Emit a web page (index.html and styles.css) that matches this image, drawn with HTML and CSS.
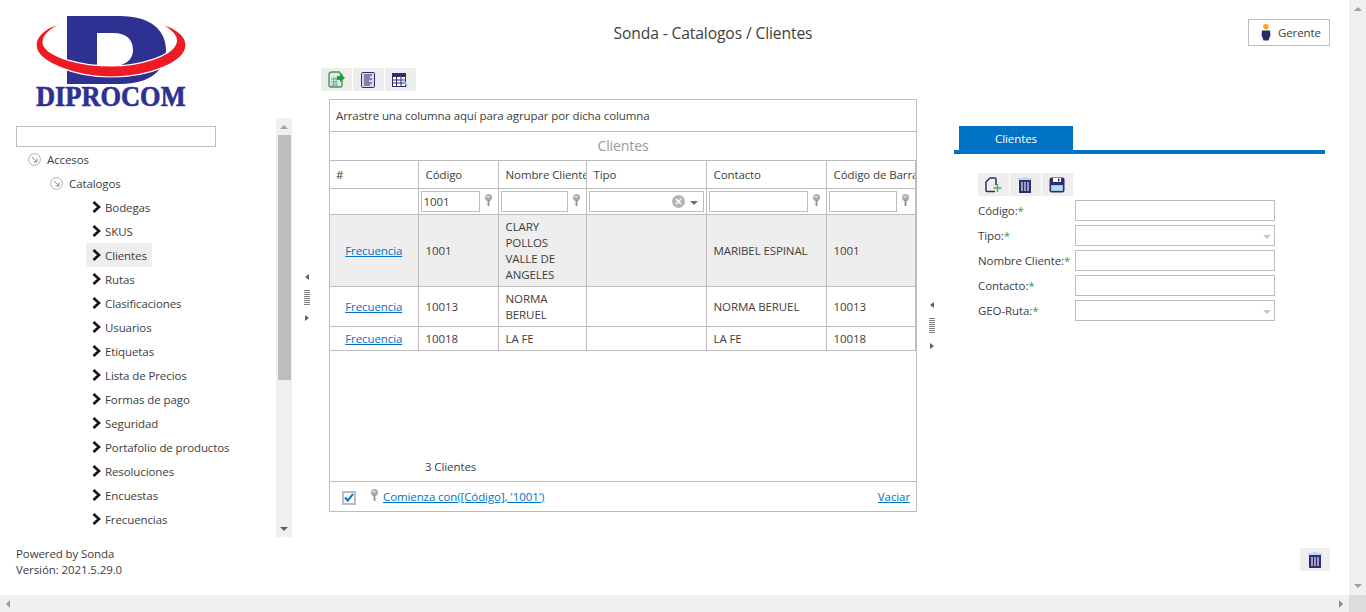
FILE: index.html
```html
<!DOCTYPE html>
<html lang="es">

<head>
    <meta charset="UTF-8">
    <meta name="viewport" content="width=device-width, initial-scale=1.0">
    <title>Sonda - Catalogos / Clientes</title>
    <link rel="stylesheet" href="styles.css">
</head>

<body>
    <svg class="defs" width="0" height="0">
        <symbol id="pin" viewBox="0 0 9 12">
            <circle cx="4.5" cy="3.5" r="3.5" fill="#a8a8a8" />
            <ellipse cx="4" cy="2.6" rx="2" ry="1.2" fill="#d8d8d8" />
            <rect x="3.6" y="6" width="1.8" height="6" fill="#8c8c8c" />
        </symbol>
        <symbol id="chevron" viewBox="0 0 9 12">
            <path d="M1.5 1 L7 6 L1.5 11" fill="none" stroke="#111" stroke-width="2.6" />
        </symbol>
        <symbol id="node" viewBox="0 0 13 13">
            <circle cx="6.5" cy="6.5" r="5.9" fill="none" stroke="#b0b0b0" stroke-width="1" />
            <path d="M4 4 L9 9 M9 5.5 V9 H5.5" fill="none" stroke="#8a8a8a" stroke-width="1" />
        </symbol>
        <symbol id="trash" viewBox="0 0 16 16">
            <rect x="1" y="1" width="14" height="2" fill="#b5dcf2" />
            <rect x="6" y="0" width="4" height="2" fill="#b5dcf2" />
            <rect x="2" y="3" width="12" height="13" fill="#2f2d6e" />
            <rect x="4" y="5" width="2" height="9" fill="#9c9bc0" />
            <rect x="7" y="5" width="2" height="9" fill="#9c9bc0" />
            <rect x="10" y="5" width="2" height="9" fill="#9c9bc0" />
        </symbol>
    </svg>

    <div class="window">
        <div class="page">
            <aside class="sidebar">
                <svg class="logo" viewBox="0 0 150 98" width="150" height="98" role="img" aria-label="Diprocom">
                    <path fill="#2e3192" fill-rule="evenodd"
                        d="M31 0 H84 C114 0 130 14 130 34 C130 54 114 68 84 68 H31 Z M61 17 H77 C91 17 97 24 97 34 C97 44 89 50 77 50 H61 Z" />
                    <path fill="#ed1c24" stroke="#fff" stroke-width="1.2"
                        d="M27 7 C6 12 0 22 0 29 C0 46 39 61 75 61 C114 61 150 46 150 29 C150 21 142 12 122 7 C136 13 142 21 140 27 C136 40 104 50 75 50 C44 50 14 41 8 30 C4 21 14 13 27 7 Z" />
                    <text class="logo-text" x="0" y="83.3" transform="scale(1 1.08)">DIPROCOM</text>
                </svg>
                <div class="tree-box">
                    <div class="tree">
                        <input class="tree-search" type="text">
                        <ul class="tree-list">
                            <li class="level-1"><svg class="node"><use href="#node" /></svg>Accesos</li>
                            <li class="level-2"><svg class="node"><use href="#node" /></svg>Catalogos</li>
                            <li class="leaf"><svg class="chevron"><use href="#chevron" /></svg>Bodegas</li>
                            <li class="leaf"><svg class="chevron"><use href="#chevron" /></svg>SKUS</li>
                            <li class="leaf selected"><svg class="chevron"><use href="#chevron" /></svg>Clientes</li>
                            <li class="leaf"><svg class="chevron"><use href="#chevron" /></svg>Rutas</li>
                            <li class="leaf"><svg class="chevron"><use href="#chevron" /></svg>Clasificaciones</li>
                            <li class="leaf"><svg class="chevron"><use href="#chevron" /></svg>Usuarios</li>
                            <li class="leaf"><svg class="chevron"><use href="#chevron" /></svg>Etiquetas</li>
                            <li class="leaf"><svg class="chevron"><use href="#chevron" /></svg>Lista de Precios</li>
                            <li class="leaf"><svg class="chevron"><use href="#chevron" /></svg>Formas de pago</li>
                            <li class="leaf"><svg class="chevron"><use href="#chevron" /></svg>Seguridad</li>
                            <li class="leaf"><svg class="chevron"><use href="#chevron" /></svg>Portafolio de productos</li>
                            <li class="leaf"><svg class="chevron"><use href="#chevron" /></svg>Resoluciones</li>
                            <li class="leaf"><svg class="chevron"><use href="#chevron" /></svg>Encuestas</li>
                            <li class="leaf"><svg class="chevron"><use href="#chevron" /></svg>Frecuencias</li>
                        </ul>
                    </div>
                    <div class="tree-scroll">
                        <span class="arrow-up"></span>
                        <span class="tree-thumb"></span>
                        <span class="arrow-down"></span>
                    </div>
                </div>
                <p class="powered">Powered by Sonda<br>Versión: 2021.5.29.0</p>
            </aside>

            <main class="content">
                <header class="topbar">
                    <h1>Sonda - Catalogos / Clientes</h1>
                    <button class="user-btn">
                        <svg width="10" height="17" viewBox="0 0 10 17">
                            <circle cx="5" cy="2.7" r="2.7" fill="#f5a81c" />
                            <path d="M1 6.5 H9 L9.5 11 L7.5 16.5 H2.5 L0.5 11 Z" fill="#2b2a66" />
                        </svg>
                        Gerente
                    </button>
                </header>

                <div class="workspace">
                    <div class="splitter splitter-left">
                        <span class="tri-left"></span><span class="grip"></span><span class="tri-right"></span>
                    </div>

                    <section class="grid-col">
                        <div class="toolbar grid-toolbar">
                            <span class="tool">
                                <svg width="17" height="17" viewBox="0 0 17 17">
                                    <path d="M1 4 Q1 1 4 1 H11 L14 4 V14 Q14 16 12 16 H3 Q1 16 1 14 Z" fill="#dfeee0" stroke="#3c9c4e" stroke-width="1.4" />
                                    <path d="M3 8 H10 M3 11 H10 M3 14 H10 M5.5 6 V15 M8 6 V15" stroke="#7f9db5" stroke-width="1" />
                                    <path d="M9 5 H12 V2 L17 7 L12 11 V9 H9 Z" fill="#1e9e3e" />
                                </svg>
                            </span>
                            <span class="tool">
                                <svg width="14" height="16" viewBox="0 0 14 16">
                                    <rect x="0.5" y="0.5" width="13" height="15" rx="1" fill="#d8d8e8" stroke="#2f2d6e" />
                                    <path d="M3 3 H11 M3 5 H9 M3 7 H11 M3 9 H8 M3 11 H11 M3 13 H9" stroke="#2f2d6e" stroke-width="1" />
                                </svg>
                            </span>
                            <span class="tool">
                                <svg width="16" height="14" viewBox="0 0 16 14">
                                    <rect x="0.5" y="0.5" width="13" height="13" fill="#fff" stroke="#2f2d6e" />
                                    <rect x="0" y="0" width="14" height="4" fill="#2f2d6e" />
                                    <path d="M0 7 H14 M0 10 H14 M4.5 4 V14 M9 4 V14" stroke="#2f2d6e" stroke-width="1" />
                                    <path d="M10.5 5 L15 13" stroke="#8fc0e8" stroke-width="1.5" />
                                </svg>
                            </span>
                        </div>

                        <div class="grid-panel">
                            <div class="group-panel">Arrastre una columna aquí para agrupar por dicha columna</div>
                            <div class="grid-title">Clientes</div>
                            <div class="table-wrap">
                                <table class="grid-table">
                                    <colgroup>
                                        <col class="col-cmd">
                                        <col class="col-code">
                                        <col class="col-name">
                                        <col class="col-type">
                                        <col class="col-contact">
                                        <col class="col-barcode">
                                    </colgroup>
                                    <thead>
                                        <tr class="head-row">
                                            <th>#</th>
                                            <th>Código</th>
                                            <th>Nombre Cliente</th>
                                            <th>Tipo</th>
                                            <th>Contacto</th>
                                            <th>Código de Barra</th>
                                        </tr>
                                        <tr class="filter-row">
                                            <td></td>
                                            <td>
                                                <div class="filter"><input class="filter-code" type="text" value="1001"><svg class="pin"><use href="#pin" /></svg></div>
                                            </td>
                                            <td>
                                                <div class="filter"><input type="text"><svg class="pin"><use href="#pin" /></svg></div>
                                            </td>
                                            <td>
                                                <div class="combo">
                                                    <svg class="clear" width="13" height="13" viewBox="0 0 13 13">
                                                        <circle cx="6.5" cy="6.5" r="6.5" fill="#b4b4b4" />
                                                        <path d="M4 4 L9 9 M9 4 L4 9" stroke="#fff" stroke-width="1.6" />
                                                    </svg>
                                                    <span class="combo-arrow"></span>
                                                </div>
                                            </td>
                                            <td>
                                                <div class="filter"><input type="text"><svg class="pin"><use href="#pin" /></svg></div>
                                            </td>
                                            <td>
                                                <div class="filter"><input type="text"><svg class="pin"><use href="#pin" /></svg></div>
                                            </td>
                                        </tr>
                                    </thead>
                                    <tbody>
                                        <tr class="row-focused">
                                            <td class="cmd"><a href="#">Frecuencia</a></td>
                                            <td>1001</td>
                                            <td>CLARY POLLOS VALLE DE ANGELES</td>
                                            <td></td>
                                            <td>MARIBEL ESPINAL</td>
                                            <td>1001</td>
                                        </tr>
                                        <tr>
                                            <td class="cmd"><a href="#">Frecuencia</a></td>
                                            <td>10013</td>
                                            <td>NORMA BERUEL</td>
                                            <td></td>
                                            <td>NORMA BERUEL</td>
                                            <td>10013</td>
                                        </tr>
                                        <tr>
                                            <td class="cmd"><a href="#">Frecuencia</a></td>
                                            <td>10018</td>
                                            <td>LA FE</td>
                                            <td></td>
                                            <td>LA FE</td>
                                            <td>10018</td>
                                        </tr>
                                    </tbody>
                                </table>
                            </div>
                            <div class="summary">3 Clientes</div>
                            <div class="filter-bar">
                                <span class="check">
                                    <svg width="10" height="9" viewBox="0 0 10 9">
                                        <path d="M1 4.5 L3.8 7.5 L9 1" fill="none" stroke="#0072c6" stroke-width="2" />
                                    </svg>
                                </span>
                                <svg class="pin"><use href="#pin" /></svg>
                                <a href="#">Comienza con([Código], '1001')</a>
                                <a class="clear-link" href="#">Vaciar</a>
                            </div>
                        </div>
                    </section>

                    <div class="splitter splitter-right">
                        <span class="tri-left"></span><span class="grip"></span><span class="tri-right"></span>
                    </div>

                    <section class="detail">
                        <div class="tabs"><span class="tab">Clientes</span></div>
                        <div class="detail-body">
                            <div class="toolbar">
                                <span class="tool">
                                    <svg width="17" height="16" viewBox="0 0 17 16">
                                        <path d="M10 14.5 H2 Q1 14.5 1 13.5 V5 L5 1 H10 Q11 1 11 2 V8" fill="none" stroke="#2f2d6e" stroke-width="1.5" />
                                        <path d="M12.5 7 V15 M8.5 11 H16.5" stroke="#4caf50" stroke-width="1.4" />
                                    </svg>
                                </span>
                                <span class="tool"><svg class="trash"><use href="#trash" /></svg></span>
                                <span class="tool">
                                    <svg width="16" height="16" viewBox="0 0 16 16">
                                        <rect x="0.5" y="0.5" width="15" height="15" rx="2" fill="#2f2d6e" />
                                        <rect x="4" y="1" width="8" height="4" fill="#fff" />
                                        <rect x="9" y="1.5" width="1.5" height="3" fill="#2f2d6e" />
                                        <rect x="2" y="8" width="12" height="6" fill="#8fc0e8" />
                                        <path d="M3 10 H13 M3 12 H13" stroke="#fff" stroke-width="0.8" />
                                    </svg>
                                </span>
                            </div>
                            <form class="form">
                                <label>Código:<em>*</em></label>
                                <input type="text">
                                <label>Tipo:<em>*</em></label>
                                <div class="select"><span class="select-arrow"></span></div>
                                <label>Nombre Cliente:<em>*</em></label>
                                <input type="text">
                                <label>Contacto:<em>*</em></label>
                                <input type="text">
                                <label>GEO-Ruta:<em>*</em></label>
                                <div class="select"><span class="select-arrow"></span></div>
                            </form>
                        </div>
                    </section>
                </div>

                <div class="bottom-tools">
                    <span class="tool"><svg class="trash"><use href="#trash" /></svg></span>
                </div>
            </main>
        </div>

        <div class="page-vscroll">
            <span class="arrow-up"></span>
            <span class="arrow-down"></span>
        </div>
        <div class="page-hscroll">
            <span class="arrow-left"></span>
            <span class="arrow-right"></span>
        </div>
        <div class="scroll-corner"></div>
    </div>
</body>

</html>
```

FILE: styles.css
```css
* {
    box-sizing: border-box;
}

body {
    margin: 0;
    font-family: 'Open Sans', 'Noto Sans', sans-serif;
    font-size: 11.5px;
    letter-spacing: -0.1px;
    color: #3d3d3d;
    background-color: #fff;
    overflow: hidden;
}

a {
    color: #0072c6;
}

input {
    font: inherit;
    letter-spacing: inherit;
    color: inherit;
    border: 1px solid #bdbdbd;
    background-color: #fff;
    padding: 0 2px;
    outline: none;
}

.defs {
    display: block;
    height: 0;
}

.window {
    display: grid;
    grid-template-columns: 1fr 17px;
    grid-template-rows: 1fr 17px;
    width: 1366px;
    height: 612px;
}

.page {
    display: flex;
    min-height: 0;
}

/* sidebar */
.sidebar {
    width: 292px;
    flex: none;
    display: flex;
    flex-direction: column;
}

.logo {
    display: block;
    flex: none;
    margin: 16px 0 0 36px;
}

.logo-text {
    font-family: 'Liberation Serif', serif;
    font-weight: bold;
    font-size: 26.4px;
    letter-spacing: 0;
    fill: #2e3192;
    stroke: #2e3192;
    stroke-width: 0.6;
}

.tree-box {
    display: flex;
    flex: none;
    height: 419px;
    margin-top: 4px;
}

.tree {
    flex: 1;
    padding: 8px 0 0 16px;
    overflow: hidden;
}

.tree-search {
    display: block;
    width: 200px;
    height: 21px;
}

.tree-list {
    list-style: none;
    margin: 0;
    padding: 0;
}

.tree-list li {
    display: flex;
    align-items: center;
    height: 24px;
}

.level-1 {
    padding-left: 12px;
}

.level-2 {
    padding-left: 34px;
}

.leaf {
    padding-left: 76px;
}

.tree-list .selected {
    width: 66px;
    margin-left: 70px;
    padding-left: 6px;
    background-color: #eee;
}

.node {
    width: 13px;
    height: 13px;
    margin-right: 6px;
}

.chevron {
    width: 9px;
    height: 12px;
    margin-right: 4px;
}

.tree-scroll {
    width: 16px;
    flex: none;
    display: flex;
    flex-direction: column;
    align-items: center;
    background-color: #f0f0f0;
}

.tree-thumb {
    width: 13px;
    height: 245px;
    margin-top: 6px;
    margin-bottom: auto;
    background-color: #bdbdbd;
}

.tree-scroll .arrow-up {
    margin-top: 7px;
}

.tree-scroll .arrow-down {
    margin-bottom: 6px;
}

.powered {
    margin: 9px 0 0 16px;
    line-height: 16px;
}

/* scroll arrows */
.arrow-up,
.arrow-down {
    width: 0;
    height: 0;
    border-left: 4px solid transparent;
    border-right: 4px solid transparent;
}

.arrow-up {
    border-bottom: 4px solid #a0a0a0;
}

.arrow-down {
    border-top: 4px solid #606060;
}

.arrow-left,
.arrow-right {
    width: 0;
    height: 0;
    border-top: 4px solid transparent;
    border-bottom: 4px solid transparent;
}

.arrow-left {
    border-right: 4px solid #a0a0a0;
}

.arrow-right {
    border-left: 4px solid #8c8c8c;
}

.page-vscroll {
    display: flex;
    flex-direction: column;
    justify-content: space-between;
    align-items: center;
    padding: 7px 0 7px;
    background-color: #f0f0f0;
}

.page-vscroll .arrow-down {
    border-top-color: #a0a0a0;
}

.page-hscroll {
    display: flex;
    justify-content: space-between;
    align-items: center;
    padding: 0 6px;
    background-color: #f0f0f0;
}

.scroll-corner {
    background-color: #dcdcdc;
}

/* main column */
.content {
    flex: 1;
    min-width: 0;
    display: flex;
    flex-direction: column;
}

.topbar {
    display: flex;
    height: 68px;
    justify-content: flex-end;
    align-items: flex-start;
    padding: 19px 19px 0 0;
}

.topbar h1 {
    flex: 1;
    margin: 3px 0 0;
    padding-right: 114px;
    font-size: 15.6px;
    font-weight: normal;
    line-height: 22px;
    text-align: center;
}

.user-btn {
    display: flex;
    align-items: center;
    gap: 7px;
    width: 82px;
    height: 27px;
    padding: 0 0 0 12px;
    font: inherit;
    letter-spacing: inherit;
    color: inherit;
    background-color: #fff;
    border: 1px solid #bdbdbd;
}

.workspace {
    display: flex;
    height: 444px;
}

.splitter {
    width: 37px;
    flex: none;
    display: flex;
    flex-direction: column;
    align-items: center;
    gap: 10px;
    padding-right: 8px;
}

.splitter-left {
    padding-top: 206px;
}

.splitter-right {
    padding-top: 234px;
}

.tri-left,
.tri-right {
    width: 0;
    height: 0;
    border-top: 3px solid transparent;
    border-bottom: 3px solid transparent;
}

.tri-left {
    border-right: 4px solid #606060;
}

.tri-right {
    border-left: 4px solid #606060;
}

.grip {
    width: 6px;
    height: 15px;
    background: repeating-linear-gradient(#808080 0 1px, #fff 1px 2px);
}

/* grid */
.grid-col {
    width: 588px;
    flex: none;
}

.toolbar {
    display: flex;
    gap: 1.5px;
}

.grid-toolbar {
    margin-left: -8px;
    margin-bottom: 8px;
}

.tool {
    display: flex;
    align-items: center;
    justify-content: center;
    width: 30.5px;
    height: 23px;
    background-color: #eee;
}

.trash {
    width: 16px;
    height: 16px;
}

.grid-panel {
    height: 413px;
    display: flex;
    flex-direction: column;
    border: 1px solid #bdbdbd;
}

.group-panel {
    height: 32px;
    padding: 1px 0 0 6px;
    line-height: 30px;
    border-bottom: 1px solid #bdbdbd;
}

.grid-title {
    height: 28px;
    font-size: 14px;
    line-height: 28px;
    color: #9a9a9a;
    text-align: center;
}

.table-wrap {
    flex: 1;
    overflow: hidden;
}

.grid-table {
    width: 585px;
    table-layout: fixed;
    border-collapse: collapse;
}

.col-cmd {
    width: 88px;
}

.col-code {
    width: 80px;
}

.col-name {
    width: 88px;
}

.col-type,
.col-contact {
    width: 120px;
}

.col-barcode {
    width: 89px;
}

.grid-table th,
.grid-table td {
    border: 1px solid #bdbdbd;
    padding: 4px 6px 3px 7px;
    line-height: 16px;
    text-align: left;
    font-weight: normal;
}

.grid-table tr > :first-child {
    border-left: 0;
    padding-left: 6px;
}

.grid-table th {
    height: 28px;
    white-space: nowrap;
    overflow: hidden;
}

.grid-table .filter-row td {
    height: 26px;
    padding: 0 2px;
}

.grid-table .cmd {
    text-align: center;
}

.row-focused td {
    background-color: #eee;
}

.filter {
    display: flex;
    align-items: center;
    gap: 4px;
    padding-right: 3px;
}

.filter input {
    flex: 1;
    min-width: 0;
    width: 10px;
    height: 21px;
}

.pin {
    width: 9px;
    height: 12px;
    flex: none;
    margin-bottom: 3px;
}

.combo {
    display: flex;
    align-items: center;
    justify-content: flex-end;
    gap: 5px;
    height: 21px;
    padding-right: 5px;
    background-color: #fff;
    border: 1px solid #bdbdbd;
}

.combo-arrow,
.select-arrow {
    width: 0;
    height: 0;
    border-left: 4px solid transparent;
    border-right: 4px solid transparent;
    border-top: 4px solid #707070;
    margin-top: 2px;
}

.summary {
    height: 28px;
    padding-left: 95px;
    line-height: 28px;
}

.filter-bar {
    display: flex;
    align-items: center;
    height: 30px;
    padding: 0 6px 1px 12px;
    border-top: 1px solid #bdbdbd;
}

.check {
    display: flex;
    align-items: center;
    justify-content: center;
    width: 14px;
    height: 14px;
    margin: 3px 14px 0 0;
    background-color: #f4f8fc;
    border: 2px solid #bdbdbd;
}

.filter-bar .pin {
    margin-right: 4px;
}

.clear-link {
    margin-left: auto;
}

/* right panel */
.detail {
    width: 371px;
    flex: none;
    padding-top: 58px;
}

.tabs {
    padding-left: 5px;
    border-bottom: 4px solid #0072c6;
}

.tab {
    display: block;
    width: 114px;
    height: 24px;
    line-height: 25px;
    text-align: center;
    color: #fff;
    background-color: #0072c6;
}

.detail-body {
    padding: 19px 0 0 24px;
}

.form {
    display: grid;
    grid-template-columns: 97px 200px;
    grid-auto-rows: 21px;
    row-gap: 4px;
    align-items: center;
    margin-top: 4px;
}

.form label {
    white-space: nowrap;
}

.form label em {
    font-style: normal;
    color: #2e9e5b;
}

.form input,
.select {
    width: 200px;
    height: 21px;
}

.select {
    display: flex;
    align-items: center;
    justify-content: flex-end;
    padding-right: 3px;
    border: 1px solid #bdbdbd;
}

.select-arrow {
    border-top-color: #c8c8c8;
}

.bottom-tools {
    display: flex;
    justify-content: flex-end;
    padding: 36px 19px 0 0;
}
```
